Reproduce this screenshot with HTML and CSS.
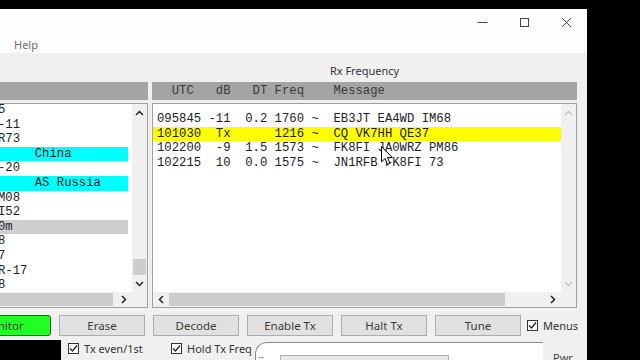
FILE: index.html
```html
<!DOCTYPE html>
<html lang="en">
<head>
    <meta charset="UTF-8">
    <title>WSJT-X</title>
    <link rel="stylesheet" href="styles.css">
</head>
<body>
    <div class="window">
        <div class="titlebar">
            <div class="win-btn">
                <svg width="11" height="11" viewBox="0 0 11 11"><path d="M0.5 5.5 H10.5" stroke="#444" stroke-width="1"/></svg>
            </div>
            <div class="win-btn">
                <svg width="11" height="11" viewBox="0 0 11 11"><rect x="1.5" y="1.5" width="8" height="8" fill="none" stroke="#444" stroke-width="1"/></svg>
            </div>
            <div class="win-btn">
                <svg width="11" height="11" viewBox="0 0 11 11"><path d="M1 1 L10 10 M10 1 L1 10" stroke="#444" stroke-width="1"/></svg>
            </div>
        </div>
        <div class="menubar">Help</div>

        <div class="panes">
            <div class="pane pane-left">
                <div class="pane-label"></div>
                <div class="pane-head"></div>
                <div class="list-box">
                    <div class="list-text">
                        <div class="row">5</div>
                        <div class="row">-11</div>
                        <div class="row">R73</div>
                        <div class="row row-cyan">     China</div>
                        <div class="row">-20</div>
                        <div class="row row-cyan">     AS Russia</div>
                        <div class="row">M08</div>
                        <div class="row">I52</div>
                        <div class="row row-sel">0m</div>
                        <div class="row">8</div>
                        <div class="row">7</div>
                        <div class="row">R-17</div>
                        <div class="row">8</div>
                    </div>
                    <div class="vscroll">
                        <div class="sb-arrow">
                            <svg width="9" height="6" viewBox="0 0 9 6"><path d="M1 5 L4.5 1.5 L8 5" fill="none" stroke="#222" stroke-width="1.5"/></svg>
                        </div>
                        <div class="sb-track"><div class="sb-thumb-v"></div></div>
                        <div class="sb-arrow">
                            <svg width="9" height="6" viewBox="0 0 9 6"><path d="M1 1 L4.5 4.5 L8 1" fill="none" stroke="#222" stroke-width="1.5"/></svg>
                        </div>
                    </div>
                    <div class="hscroll">
                        <div class="sb-arrow-h">
                            <svg width="6" height="9" viewBox="0 0 6 9"><path d="M5 1 L1.5 4.5 L5 8" fill="none" stroke="#222" stroke-width="1.5"/></svg>
                        </div>
                        <div class="sb-track-h"><div class="sb-thumb-h thumb-left"></div></div>
                        <div class="sb-arrow-h">
                            <svg width="6" height="9" viewBox="0 0 6 9"><path d="M1 1 L4.5 4.5 L1 8" fill="none" stroke="#222" stroke-width="1.5"/></svg>
                        </div>
                    </div>
                    <div class="sb-corner"></div>
                </div>
            </div>

            <div class="pane pane-right">
                <div class="pane-label">Rx Frequency</div>
                <div class="pane-head">  UTC   dB   DT Freq    Message</div>
                <div class="list-box">
                    <div class="list-text text-rx">
                        <div class="row">095845 -11  0.2 1760 ~  EB3JT EA4WD IM68</div>
                        <div class="row row-tx">101030  Tx      1216 ~  CQ VK7HH QE37</div>
                        <div class="row">102200  -9  1.5 1573 ~  FK8FI JA0WRZ PM86</div>
                        <div class="row">102215  10  0.0 1575 ~  JN1RFB FK8FI 73</div>
                    </div>
                    <div class="vscroll">
                        <div class="sb-arrow">
                            <svg width="9" height="6" viewBox="0 0 9 6"><path d="M1 5 L4.5 1.5 L8 5" fill="none" stroke="#c4c4c4" stroke-width="1.5"/></svg>
                        </div>
                        <div class="sb-track"></div>
                        <div class="sb-arrow">
                            <svg width="9" height="6" viewBox="0 0 9 6"><path d="M1 1 L4.5 4.5 L8 1" fill="none" stroke="#c4c4c4" stroke-width="1.5"/></svg>
                        </div>
                    </div>
                    <div class="hscroll">
                        <div class="sb-arrow-h">
                            <svg width="6" height="9" viewBox="0 0 6 9"><path d="M5 1 L1.5 4.5 L5 8" fill="none" stroke="#222" stroke-width="1.5"/></svg>
                        </div>
                        <div class="sb-track-h"><div class="sb-thumb-h thumb-right"></div></div>
                        <div class="sb-arrow-h">
                            <svg width="6" height="9" viewBox="0 0 6 9"><path d="M1 1 L4.5 4.5 L1 8" fill="none" stroke="#222" stroke-width="1.5"/></svg>
                        </div>
                    </div>
                    <div class="sb-corner"></div>
                </div>
            </div>
        </div>

        <div class="controls">
            <button class="btn btn-monitor">Monitor</button>
            <button class="btn">Erase</button>
            <button class="btn">Decode</button>
            <button class="btn">Enable Tx</button>
            <button class="btn">Halt Tx</button>
            <button class="btn">Tune</button>
            <label class="check check-menus"><span class="box"><svg width="9" height="9" viewBox="0 0 9 9"><path d="M1 4.5 L3.5 7 L8 1.5" fill="none" stroke="#222" stroke-width="1.2"/></svg></span>Menus</label>
        </div>

        <div class="lower">
            <div class="clock"></div>
            <label class="check check-tx"><span class="box"><svg width="9" height="9" viewBox="0 0 9 9"><path d="M1 4.5 L3.5 7 L8 1.5" fill="none" stroke="#222" stroke-width="1.2"/></svg></span>Tx even/1st</label>
            <label class="check check-hold"><span class="box"><svg width="9" height="9" viewBox="0 0 9 9"><path d="M1 4.5 L3.5 7 L8 1.5" fill="none" stroke="#222" stroke-width="1.2"/></svg></span>Hold Tx Freq</label>
            <div class="tab-panel">
                <span class="tab-glyph">&#x2194;</span>
                <div class="tab-field"></div>
            </div>
            <div class="pwr">Pwr</div>
        </div>
    </div>

    <!-- mouse pointer over the Rx list -->
    <svg class="cursor" width="13" height="20" viewBox="0 0 13 20">
        <path d="M0.5 0.5 L0.5 16 L4 12.5 L6.6 18.5 L9 17.4 L6.5 11.6 L11.3 11.6 Z" fill="#fff" stroke="#000" stroke-width="1"/>
    </svg>
</body>
</html>
```

FILE: styles.css
```css
body {
    margin: 0;
    width: 640px;
    height: 360px;
    overflow: hidden;
    background-color: #000;
    font-family: "Noto Sans", sans-serif;
    font-size: 11px;
    color: #333;
    position: relative;
    padding-top: 9px;
    box-sizing: border-box;
}
.window {
    width: 587px;
    height: 351px;
    background-color: #f0f0f0;
    overflow: hidden;
}
.titlebar {
    height: 27px;
    background-color: #fdfdfd;
    display: flex;
    justify-content: flex-end;
}
.win-btn {
    width: 42px;
    display: flex;
    align-items: center;
    justify-content: center;
}
.menubar {
    height: 17px;
    line-height: 17px;
    padding-left: 14px;
    background-color: #fdfdfd;
    color: #6e6e6e;
}
.panes {
    display: flex;
    gap: 4px;
    padding-top: 9px;
}
.pane-left {
    width: 200px;
    margin-left: -52px;
}
.pane-right {
    width: 425px;
}
.pane-label {
    height: 18px;
    line-height: 18px;
    text-align: center;
    color: #333;
}
.pane-head {
    height: 18px;
    margin-top: 2px;
    padding-left: 5px;
    background-color: #a4a4a4;
    font-family: "Liberation Mono", monospace;
    font-size: 12.25px;
    line-height: 18px;
    white-space: pre;
    color: #3a3a3a;
}
.list-box {
    margin-top: 3px;
    height: 205px;
    box-sizing: border-box;
    border: 1px solid #a0a0a0;
    background-color: #fff;
    display: grid;
    grid-template-columns: 1fr 15px;
    grid-template-rows: 1fr 15px;
}
.list-text {
    font-family: "Liberation Mono", monospace;
    font-size: 12.25px;
    line-height: 14.6px;
    overflow: hidden;
    color: #222;
}
.row {
    white-space: pre;
}
.pane-left .list-text {
    margin-top: -1px;
}
.pane-left .row {
    padding-left: 49px;
    margin-right: 4px;
}
.text-rx {
    padding-top: 8px;
}
.text-rx .row {
    padding-left: 4px;
}
.row-cyan {
    background-color: #00ffff;
}
.row-sel {
    background-color: #cfcfcf;
}
.row-tx {
    background-color: #ffff00;
}

/* scroll bars */
.vscroll {
    background-color: #f0f0f0;
    display: flex;
    flex-direction: column;
}
.sb-arrow {
    height: 17px;
    display: flex;
    align-items: center;
    justify-content: center;
}
.sb-track {
    flex: 1;
    display: flex;
    flex-direction: column;
    justify-content: flex-end;
    padding: 0 1px;
}
.sb-thumb-v {
    height: 16px;
    background-color: #cdcdcd;
}
.hscroll {
    background-color: #f0f0f0;
    display: flex;
}
.sb-arrow-h {
    width: 16px;
    display: flex;
    align-items: center;
    justify-content: center;
}
.sb-track-h {
    flex: 1;
    display: flex;
    align-items: center;
}
.sb-thumb-h {
    height: 13px;
    background-color: #cdcdcd;
}
.thumb-left {
    width: 148px;
}
.thumb-right {
    width: 336px;
}
.sb-corner {
    background-color: #f0f0f0;
}

/* buttons */
.controls {
    display: flex;
    align-items: center;
    gap: 8px;
    margin-top: 7px;
    margin-left: -35px;
}
.btn {
    width: 86px;
    height: 21px;
    padding: 0;
    border: 1px solid #adadad;
    background-color: #e1e1e1;
    font-family: "Noto Sans", sans-serif;
    font-size: 11.5px;
    color: #3a3a3a;
}
.btn-monitor {
    background-color: #22ff22;
    border: 1px solid #2c5a2c;
    border-radius: 3px;
    padding-right: 12px;
}
.check {
    display: flex;
    align-items: center;
    gap: 5px;
    font-size: 11px;
    color: #333;
    white-space: nowrap;
}
.box {
    width: 11px;
    height: 11px;
    box-sizing: border-box;
    border: 1px solid #333;
    background-color: #fff;
    display: flex;
    align-items: center;
    justify-content: center;
}
.check-menus {
    margin-left: -2px;
}

/* lower strip */
.lower {
    display: flex;
    align-items: flex-start;
    margin-top: 4px;
}
.clock {
    flex-shrink: 0;
    width: 61px;
    height: 30px;
    background-color: #000;
}
.check-tx {
    width: 72px;
    margin-left: 7px;
    margin-top: 1px;
}
.check-hold {
    width: 78px;
    margin-left: 31px;
    margin-top: 1px;
}
.tab-panel {
    flex-shrink: 0;
    width: 288px;
    height: 30px;
    margin-left: 6px;
    margin-top: 2px;
    box-sizing: border-box;
    border-top: 1px solid #8a8a8a;
    border-left: 1px solid #8a8a8a;
    border-top-left-radius: 12px;
    background-color: #fff;
    display: flex;
    align-items: flex-start;
}
.tab-glyph {
    font-size: 8px;
    line-height: 8px;
    margin-top: 9px;
    margin-left: 1px;
    color: #333;
}
.tab-field {
    width: 167px;
    height: 20px;
    margin-left: 15px;
    margin-top: 12px;
    border: 1px solid #b0b0b0;
    background-color: #e8e8e8;
}
.pwr {
    margin-left: 10px;
    margin-top: 10px;
    font-size: 11px;
    color: #444;
}
.cursor {
    position: absolute;
    left: 381px;
    top: 146px;
}
```
